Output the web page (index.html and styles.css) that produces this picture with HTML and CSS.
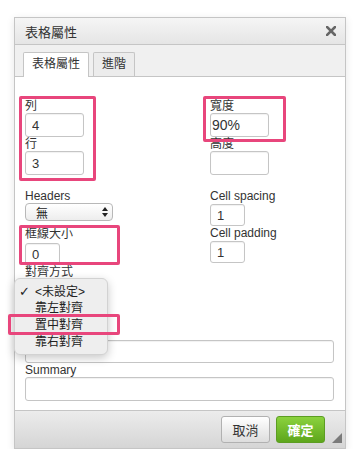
FILE: index.html
```html
<!DOCTYPE html>
<html lang="zh-Hant">
<head>
    <meta charset="UTF-8">
    <meta name="viewport" content="width=device-width, initial-scale=1.0">
    <title>表格屬性</title>
    <link rel="stylesheet" href="styles.css">
</head>
<body>
    <div class="dialog">
        <div class="dialog-head">
            <span class="dialog-title">表格屬性</span>
            <svg class="close" width="10" height="10" viewBox="0 0 10 10">
                <path d="M1 1 L9 9 M9 1 L1 9" stroke="#666" stroke-width="2.6" stroke-linecap="square"/>
            </svg>
        </div>

        <div class="tabs">
            <div class="tab active">表格屬性</div>
            <div class="tab">進階</div>
        </div>

        <div class="panel">
            <div class="columns">
                <div class="col">
                    <label class="lbl">列</label>
                    <input class="field w-md" type="text" value="4">
                    <label class="lbl">行</label>
                    <input class="field w-md" type="text" value="3">

                    <label class="lbl gap-top">Headers</label>
                    <div class="select">
                        <span>無</span>
                        <svg width="6" height="10" viewBox="0 0 6 10">
                            <path d="M0 4 L3 0 L6 4 Z M0 6 L3 10 L6 6 Z" fill="#222"/>
                        </svg>
                    </div>
                    <label class="lbl after-select">框線大小</label>
                    <input class="field w-sm short border-size" type="text" value="0">
                    <label class="lbl">對齊方式</label>
                    <!-- covered by the open menu below -->
                    <div class="select narrow"></div>
                </div>

                <div class="col">
                    <label class="lbl">寬度</label>
                    <input class="field w-md tight" type="text" value="90%">
                    <label class="lbl">高度</label>
                    <input class="field w-md" type="text" value="">

                    <label class="lbl gap-top">Cell spacing</label>
                    <input class="field w-sm short near" type="text" value="1">
                    <label class="lbl">Cell padding</label>
                    <input class="field w-sm short near" type="text" value="1">
                </div>
            </div>

            <input class="field wide short-ish caption" type="text" value="">
            <label class="lbl">Summary</label>
            <input class="field wide" type="text" value="">
        </div>

        <div class="dialog-foot">
            <button class="btn">取消</button>
            <button class="btn primary">確定</button>
            <span class="grip"></span>
        </div>
    </div>

    <!-- open alignment menu -->
    <ul class="dropdown">
        <li><span class="check">✓</span>&lt;未設定&gt;</li>
        <li>靠左對齊</li>
        <li>置中對齊</li>
        <li>靠右對齊</li>
    </ul>

    <!-- highlight marks -->
    <div class="mark mark-rows"></div>
    <div class="mark mark-width"></div>
    <div class="mark mark-border"></div>
    <div class="mark mark-center"></div>
</body>
</html>
```

FILE: styles.css
```css
body {
    margin: 0;
    font-family: "Liberation Sans", "Noto Sans CJK TC", sans-serif;
    font-size: 12px;
    color: #333;
    background-color: #fff;
    position: relative;
}

.dialog {
    margin: 17px 0 0 14px;
    width: 332px;
    box-sizing: border-box;
    border: 1px solid #c5c5c5;
    background-color: #fff;
    box-shadow: 0 2px 8px rgba(0, 0, 0, 0.1);
}

.dialog-head {
    height: 26px;
    padding: 0 9px 0 10px;
    display: flex;
    align-items: center;
    justify-content: space-between;
    border-bottom: 1px solid #c5c5c5;
    background: linear-gradient(#f5f5f5, #e5e5e5);
}

.dialog-title {
    font-size: 13px;
    color: #333;
}

.close {
    display: block;
}

.tabs {
    height: 24px;
    padding: 7px 0 0 8px;
    display: flex;
    align-items: flex-end;
    gap: 4px;
    background-color: #f0f0f0;
    border-bottom: 1px solid #c5c5c5;
}

.tab {
    height: 23px;
    line-height: 22px;
    padding: 0 8px;
    border: 1px solid #c5c5c5;
    border-bottom: none;
    border-radius: 2px 2px 0 0;
    background-color: #ececec;
    color: #333;
}

.tab.active {
    height: 24px;
    margin-bottom: -1px;
    background-color: #fff;
}

.panel {
    padding: 22px 10px 9px;
    background-color: #fff;
}

.columns {
    display: grid;
    grid-template-columns: 185px 1fr;
}

.col {
    display: flex;
    flex-direction: column;
    align-items: flex-start;
}

.lbl {
    display: block;
    height: 14px;
    line-height: 14px;
    color: #333;
    white-space: nowrap;
}

.lbl.gap-top {
    margin-top: 14px;
}

.lbl.after-select {
    margin-top: 6px;
}

.field {
    display: block;
    box-sizing: border-box;
    height: 24px;
    margin: 0;
    padding: 0 6px;
    border: 1px solid #c5c5c5;
    border-radius: 3px;
    background-color: #fff;
    box-shadow: inset 0 1px 1px rgba(0, 0, 0, 0.06);
    font-family: "Liberation Sans", "Noto Sans CJK TC", sans-serif;
    font-size: 13px;
    color: #333;
    outline: none;
}

.field.w-md {
    width: 59px;
}

.field.w-sm {
    width: 35px;
}

.field.short {
    height: 22px;
}

.field.near {
    margin-top: 1px;
}

.field.border-size {
    margin-top: 2px;
}

.field.tight {
    padding-left: 1px;
    font-size: 14px;
}

.field.wide {
    width: 309px;
}

.field.short-ish {
    height: 23px;
}

.field.caption {
    margin-top: 43px;
}

.select {
    box-sizing: border-box;
    width: 88px;
    height: 18px;
    padding: 0 4px 0 10px;
    display: flex;
    align-items: center;
    justify-content: space-between;
    border: 1px solid #b8b8b8;
    border-radius: 4px;
    background: linear-gradient(#fff, #ededed);
    font-size: 12px;
    color: #222;
}

.select.narrow {
    width: 80px;
}

.dialog-foot {
    height: 38px;
    padding: 5px 3px 0 0;
    box-sizing: border-box;
    display: flex;
    justify-content: flex-end;
    align-items: flex-start;
    border-top: 1px solid #c5c5c5;
    background: linear-gradient(#ececec, #d5d5d5);
}

.btn {
    width: 49px;
    height: 27px;
    margin-left: 6px;
    padding: 0;
    border: 1px solid #b1b1b1;
    border-radius: 3px;
    background: linear-gradient(#ffffff, #dddddd);
    font-family: "Liberation Sans", "Noto Sans CJK TC", sans-serif;
    font-size: 13px;
    color: #333;
}

.btn.primary {
    border-color: #5c9d22;
    background: linear-gradient(#8bd23e, #5da61c);
    color: #fff;
    font-weight: bold;
}

.grip {
    width: 0;
    height: 0;
    margin: 0 0 5px 7px;
    align-self: flex-end;
    border-left: 10px solid transparent;
    border-bottom: 10px solid #7a7a7a;
}

.dropdown {
    position: absolute;
    left: 14px;
    top: 278px;
    width: 94px;
    box-sizing: border-box;
    margin: 0;
    padding: 4px 0 3px;
    list-style: none;
    border: 1px solid #d2d2d2;
    border-radius: 6px;
    background-color: #eeeeee;
    box-shadow: 0 3px 10px rgba(0, 0, 0, 0.22);
}

.dropdown li {
    height: 17px;
    line-height: 17px;
    padding-left: 20px;
    font-size: 12px;
    color: #222;
    white-space: nowrap;
    overflow: hidden;
}

.check {
    display: inline-block;
    width: 16px;
    margin-left: -16px;
    font-family: "DejaVu Sans", sans-serif;
    font-weight: bold;
    font-size: 13px;
    color: #222;
}

.mark {
    position: absolute;
    box-sizing: border-box;
    border: 3px solid #e8467c;
    border-radius: 2px;
}

.mark-rows {
    left: 19px;
    top: 96px;
    width: 77px;
    height: 85px;
}

.mark-width {
    left: 203px;
    top: 96px;
    width: 83px;
    height: 46px;
}

.mark-border {
    left: 19px;
    top: 225px;
    width: 101px;
    height: 40px;
}

.mark-center {
    left: 8px;
    top: 314px;
    width: 112px;
    height: 21px;
}
```
